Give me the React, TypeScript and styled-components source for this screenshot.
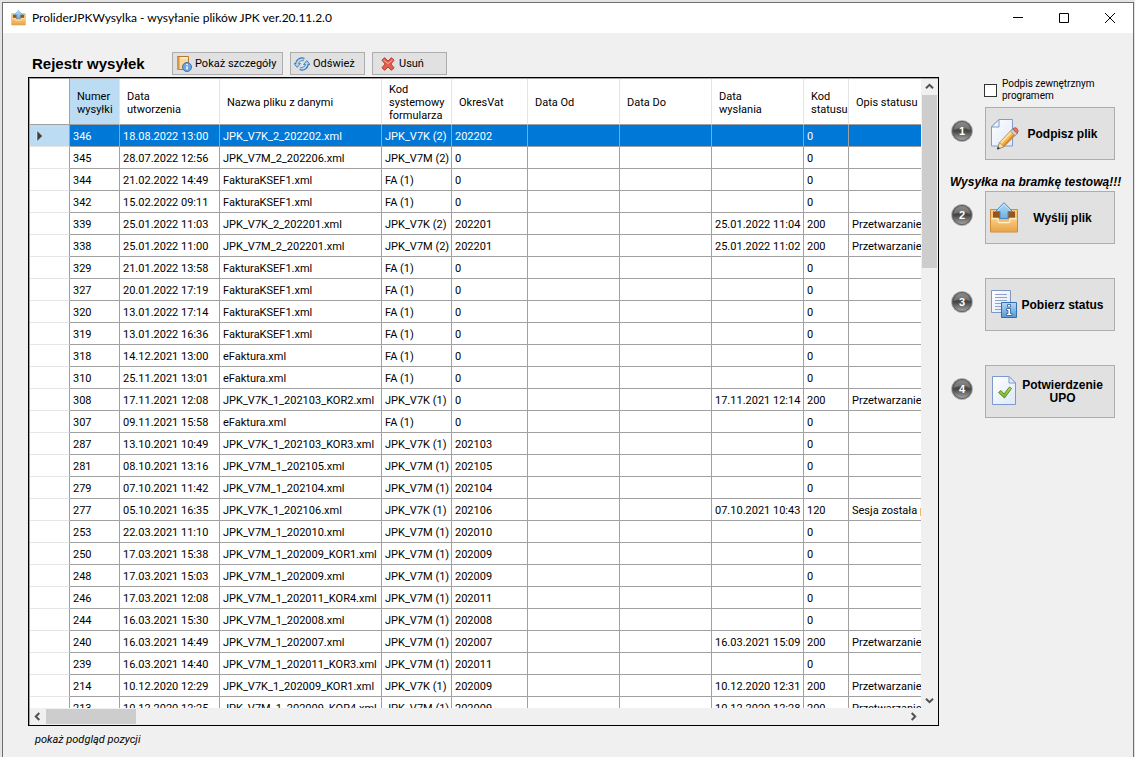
import React from "react";
import styled, { createGlobalStyle, css } from "styled-components";

const GlobalStyle = createGlobalStyle`
  *, *::before, *::after { box-sizing: border-box; }
  body {
    margin: 0;
    background: #e4e4e4;
    color: #000;
    font-family: Roboto, "Liberation Sans", Arial, sans-serif;
    font-size: 11px;
    line-height: 13px;
  }
  button { font: inherit; color: inherit; }
`;

const boldFace = css`
  font-family: "Liberation Sans", Arial, sans-serif;
  font-weight: 700;
`;

/* ---------- window frame ---------- */

const Desktop = styled.div`
  height: 100vh;
  padding: 2px 1px 0 2px;
`;

const Window = styled.div`
  display: flex;
  flex-direction: column;
  height: 100%;
  border: 1px solid #6e6e6e;
  border-bottom: 0;
  background: #f0f0f0;
`;

const TitleBar = styled.header`
  display: flex;
  align-items: center;
  flex: none;
  height: 30px;
  padding-left: 8px;
  background: #fff;
`;

const Title = styled.h1`
  flex: 1;
  margin: 0 0 0 5px;
  font-family: Lato, "Segoe UI", sans-serif;
  font-size: 12px;
  font-weight: 400;
  line-height: 16px;
  white-space: nowrap;
`;

const CaptionButton = styled.button`
  display: flex;
  align-items: center;
  justify-content: center;
  width: 46px;
  height: 30px;
  padding: 0;
  border: 0;
  background: transparent;
`;

const Body = styled.div`
  display: flex;
  flex: 1;
  min-height: 0;
  padding-left: 25px;
`;

/* ---------- left part ---------- */

const Register = styled.main`
  display: flex;
  flex: 1;
  flex-direction: column;
  min-width: 0;
`;

const Toolbar = styled.div`
  display: flex;
  align-items: center;
  flex: none;
  gap: 7px;
  padding: 19px 0 2px 4px;
`;

const Heading = styled.h2`
  width: 133px;
  margin: 0;
  ${boldFace}
  font-size: 15px;
  line-height: 20px;
  white-space: nowrap;
`;

const ToolButton = styled.button<{ $wide?: boolean; $inset?: boolean }>`
  display: flex;
  align-items: center;
  gap: 3px;
  width: ${(p) => (p.$wide ? 111 : 75)}px;
  height: 23px;
  padding: 0 0 0 ${(p) => (p.$inset ? 7 : 3)}px;
  border: 1px solid #adadad;
  background: #e1e1e1;
  white-space: nowrap;
`;

const GridFrame = styled.div`
  flex: 1;
  min-height: 0;
  border: 1px solid #000;
`;

const GridInner = styled.div`
  display: grid;
  grid-template-columns: minmax(0, 1fr) 15px;
  grid-template-rows: minmax(0, 1fr) 15px;
  gap: 1px;
  height: 100%;
  padding: 0 1px 1px 0;
  border-top: 1px solid #a0a0a0;
  border-left: 1px solid #a0a0a0;
`;

const Viewport = styled.div`
  overflow: hidden;
  background: #fff;
`;

const Table = styled.table`
  width: 100%;
  border-collapse: separate;
  border-spacing: 0;
  table-layout: fixed;
`;

const HeadCell = styled.th<{ $current?: boolean; $corner?: boolean }>`
  height: 46px;
  padding: 2px 0 0 7px;
  border-right: 1px solid ${(p) => (p.$corner ? "#a0a0a0" : "#e5e5e5")};
  border-bottom: 1px solid #a0a0a0;
  background: ${(p) => (p.$current ? "#bcdcf4" : "#fff")};
  font-weight: 400;
  text-align: left;
  white-space: pre;
  &:last-child { border-right: 0; }
`;

const RowHead = styled.td`
  padding: 0 0 0 6px;
  border-right: 1px solid #a0a0a0;
  border-bottom: 1px solid #e5e5e5;
  svg { display: block; }
`;

const Cell = styled.td`
  height: 22px;
  padding: 2px 0 0 3px;
  overflow: hidden;
  border-right: 1px solid #a0a0a0;
  border-bottom: 1px solid #a0a0a0;
  white-space: nowrap;
  &:last-child { border-right: 0; }
`;

const Row = styled.tr<{ $selected?: boolean }>`
  ${(p) =>
    p.$selected &&
    css`
      ${Cell} { background: #0078d7; color: #fff; }
      ${RowHead} { background: #bcdcf4; }
    `}
`;

const Scroll = styled.div<{ $horizontal?: boolean }>`
  display: flex;
  flex-direction: ${(p) => (p.$horizontal ? "row" : "column")};
  background: #f0f0f0;
`;

const ScrollButton = styled.button`
  display: flex;
  align-items: center;
  justify-content: center;
  flex: none;
  width: 15px;
  height: 15px;
  padding: 0;
  border: 0;
  background: transparent;
`;

const Track = styled.div<{ $horizontal?: boolean }>`
  display: flex;
  flex: 1;
  flex-direction: ${(p) => (p.$horizontal ? "row" : "column")};
  padding: ${(p) => (p.$horizontal ? "0 1px" : "1px 0")};
`;

const Thumb = styled.div<{ $share: number }>`
  flex: 0 0 ${(p) => p.$share}%;
  background: #cdcdcd;
`;

const Footer = styled.footer`
  flex: none;
  height: 31px;
  padding: 7px 0 0 7px;
  font-style: italic;
`;

/* ---------- right part ---------- */

const Steps = styled.aside`
  display: flex;
  flex: none;
  flex-direction: column;
  width: 194px;
  padding: 45px 0 0 11px;
`;

const ExternalSign = styled.label`
  display: flex;
  align-items: center;
  gap: 5px;
  margin: 0 0 5px 34px;
  font-size: 10px;
  line-height: 12px;
  white-space: pre;
`;

const CheckBox = styled.input`
  width: 13px;
  height: 13px;
  margin: 0;
  border: 1px solid #333;
  background: #fff;
  appearance: none;
`;

const Step = styled.div<{ $spaced?: boolean }>`
  display: flex;
  align-items: center;
  gap: 11px;
  margin-top: ${(p) => (p.$spaced ? 34 : 0)}px;
`;

const Badge = styled.span`
  flex: none;
  width: 24px;
  height: 30px;
  svg { display: block; }
`;

const StepButton = styled.button`
  display: flex;
  align-items: center;
  width: 130px;
  height: 53px;
  padding: 0 10px 0 3px;
  border: 1px solid #adadad;
  background: #e1e1e1;
  ${boldFace}
  font-size: 12px;
  svg { flex: none; }
`;

const StepLabel = styled.span`
  flex: 1;
  padding-top: 1px;
  text-align: center;
  white-space: pre;
`;

const Warning = styled.p`
  margin: 14px 0 1px;
  ${boldFace}
  font-size: 12px;
  font-style: italic;
  line-height: 16px;
  white-space: nowrap;
`;

/* ---------- drawings ---------- */

const TrayIcon = ({ size }: { size: number }) => (
  <svg width={size} height={size} viewBox="0 0 32 32" aria-hidden="true">
    <defs>
      <linearGradient id="tray" x1="0" y1="0" x2="0" y2="1">
        <stop offset="0" stopColor="#f9d084" />
        <stop offset="1" stopColor="#e8a34a" />
      </linearGradient>
      <linearGradient id="up" x1="0" y1="0" x2="0" y2="1">
        <stop offset="0" stopColor="#b4dcf5" />
        <stop offset="1" stopColor="#6fb0e0" />
      </linearGradient>
    </defs>
    <path d="M1.500 7.500h27v22.500h-27z" fill="url(#tray)" stroke="#cf8b35" />
    <path d="M4 9.500h22v7h-22z" fill="#9a5318" />
    <path d="M2 16h7v3q0 1.500 1.500 1.500h9q1.500 0 1.500-1.500v-3h7v13.500h-26z" fill="url(#tray)" />
    <path d="M2.500 16.500h6.500v2.500q0 1.500 1.500 1.500h9q1.500 0 1.500-1.500v-2.500h6.500" fill="none" stroke="#fff0c8" strokeWidth="1.300" />
    <path d="M15 .7l8.500 8.800h-4.500v7h-8v-7h-4.500z" fill="url(#up)" stroke="#4b89c4" strokeLinejoin="round" />
    <path d="M8.700 8.700l6.300-6.700 6.300 6.700" stroke="#d6edfa" strokeWidth=".8" fill="none" />
  </svg>
);

const DetailsIcon = () => (
  <svg width="16" height="16" viewBox="0 0 16 16" aria-hidden="true">
    <path d="M1.500.5h11v13h-11z" fill="#f9d9a0" stroke="#b9782f" />
    <path d="M1 1h2.500v13H1z" fill="#d99443" />
    <path d="M4 2h8" stroke="#fff5dc" />
    <circle cx="11" cy="11" r="4.500" fill="#6fa5dc" stroke="#3f72b2" />
    <path d="M11 8v1.300M11 10.200v3.300" stroke="#fff" strokeWidth="1.500" />
  </svg>
);

const RefreshIcon = () => (
  <svg width="16" height="16" viewBox="0 0 16 16" aria-hidden="true">
    <g fill="none" stroke="#3a70aa" strokeWidth="3.600">
      <path d="M3.200 9.500A5 5 0 0 1 10 3.600" />
      <path d="M12.800 6.500A5 5 0 0 1 6 12.400" />
    </g>
    <path d="M0 7.500h6.400L3.200 11.500zM16 8.500H9.600l3.200-4z" fill="#a9d2f2" stroke="#3a70aa" strokeWidth=".8" />
    <g fill="none" stroke="#b5daf5" strokeWidth="1.900">
      <path d="M3.200 8.500A5 5 0 0 1 9.700 3.600" />
      <path d="M12.800 7.500A5 5 0 0 1 6.300 12.400" />
    </g>
  </svg>
);

const DeleteIcon = () => (
  <svg width="16" height="16" viewBox="0 0 16 16" aria-hidden="true">
    <path
      d="M2 4.200 4.500 1.700 8 5l3.500-3.300L14 4.200 10.800 8l3.200 3.800-2.500 2.500L8 11l-3.500 3.300L2 11.800 5.200 8z"
      fill="#e2604f"
      stroke="#b93527"
      strokeLinejoin="round"
    />
    <path d="M3.500 4.200 8 7.500l4.500-3.500" fill="none" stroke="#f6a99b" />
  </svg>
);

const PageGradient = ({ id }: { id: string }) => (
  <linearGradient id={id} x1="0" y1="0" x2="1" y2="1">
    <stop offset="0" stopColor="#fff" />
    <stop offset="1" stopColor="#dde8f8" />
  </linearGradient>
);

const SignIcon = () => (
  <svg width="32" height="32" viewBox="0 0 32 32" aria-hidden="true">
    <defs><PageGradient id="pageSign" /></defs>
    <path d="M10 1.500h13.500v26.500H2.500v-19z" fill="url(#pageSign)" stroke="#7f9bd0" />
    <path d="M10 1.500v7.500h-7.500z" fill="#eef3fc" stroke="#7f9bd0" />
    <path d="M8.500 31l2-6.500L23.500 11l4.500 4.500L14.500 29z" fill="#f6b44a" stroke="#a8701f" strokeWidth=".8" />
    <path d="M11.700 25L24 12.500" stroke="#fde3a2" strokeWidth="1.800" />
    <path d="M14.300 28L27 15" stroke="#d98424" strokeWidth="1.400" />
    <path d="M21.500 13.300l4.500 4.500 2.300-2.300-4.500-4.500z" fill="#c9cedb" stroke="#76809a" strokeWidth=".6" />
    <path d="M23.800 11l1.500-1.200c2.100-.6 4.300 1.600 3.700 3.900l-1 1.500z" fill="#e77366" stroke="#ac3c37" strokeWidth=".7" />
    <path d="M8.500 31l2-6.500 4.200 4.300z" fill="#f8dfb5" stroke="#8f7650" strokeWidth=".5" />
    <path d="M8 31.500l1-3 2 2z" fill="#333" />
  </svg>
);

const StatusIcon = () => (
  <svg width="32" height="32" viewBox="0 0 32 32" aria-hidden="true">
    <defs>
      <PageGradient id="pageStatus" />
      <linearGradient id="info" x1="0" y1="0" x2="0" y2="1">
        <stop offset="0" stopColor="#b4d8f2" />
        <stop offset="1" stopColor="#5699d0" />
      </linearGradient>
    </defs>
    <path d="M2.500 1.500h19v22h-19z" fill="url(#pageStatus)" stroke="#8094c6" />
    <path d="M6 5.500h12M6 8.500h12M6 11.500h12M6 14.500h7M6 17.500h6M6 20.500h6" stroke="#8ea2cc" />
    <path d="M12.500 13.500h15v15h-15z" fill="url(#info)" stroke="#2d6faf" />
    <path
      d="M18.500 15.500h3v2.500h-3zM17.500 19.500h4v5h1.500v2h-5.500v-2H19v-3h-1.500z"
      fill="#fff"
      stroke="#235c9c"
      strokeWidth=".8"
    />
  </svg>
);

const ConfirmIcon = () => (
  <svg width="32" height="32" viewBox="0 0 32 32" aria-hidden="true">
    <defs>
      <PageGradient id="pageConfirm" />
      <linearGradient id="tick" x1="0" y1="0" x2="0" y2="1">
        <stop offset="0" stopColor="#b9e05c" />
        <stop offset="1" stopColor="#72ad28" />
      </linearGradient>
    </defs>
    <path d="M3.500.5H20l6.500 6.500v21.500h-23z" fill="url(#pageConfirm)" stroke="#7f98cb" />
    <path d="M20 .5V7h6.500z" fill="#e7eefa" stroke="#7f98cb" />
    <path d="M9.500 16.500l2.500-2 3 3.500 5.500-7 2 1.500-7 9.500z" fill="url(#tick)" stroke="#578a27" strokeLinejoin="round" />
  </svg>
);

const NumberBadge = ({ n }: { n: number }) => (
  <Badge>
    <svg width="24" height="24" viewBox="0 0 24 24" role="img" aria-label={`${n}`}>
      <defs>
        <linearGradient id={`ball${n}`} x1="0" y1="0" x2="0" y2="1">
          <stop offset="0" stopColor="#6a6a6a" />
          <stop offset=".5" stopColor="#444" />
          <stop offset="1" stopColor="#a8a8a8" />
        </linearGradient>
      </defs>
      <circle cx="12" cy="12" r="10.500" fill="#777" stroke="#b4b4b4" />
      <circle cx="12" cy="12" r="9.500" fill={`url(#ball${n})`} stroke="#606060" />
      <path d="M4 11a8 8 0 0 1 16 0q-8-4-16 0z" fill="#fff" opacity=".22" />
      <text x="12" y="16" textAnchor="middle" fontSize="11" fontWeight="700" fontFamily="Liberation Sans, Arial, sans-serif" fill="#fff">{n}</text>
    </svg>
  </Badge>
);

const Chevron = ({ turn }: { turn: number }) => (
  <svg width="9" height="9" viewBox="0 0 9 9" aria-hidden="true">
    <path d="M1 6.300l3.500-3.500L8 6.300" fill="none" stroke="#505050" strokeWidth="2" transform={`rotate(${turn} 4.500 4.500)`} />
  </svg>
);

const CurrentRowMark = () => (
  <svg width="8" height="12" viewBox="0 0 8 12" role="img" aria-label="Bieżący wiersz">
    <path d="M1 .5l5.500 5.500-5.500 5.500z" fill="#404040" stroke="#fff" strokeWidth=".5" />
  </svg>
);

/* ---------- data ---------- */

const columns = [
  { label: "Numer\nwysyłki", width: 50 },
  { label: "Data\nutworzenia", width: 100 },
  { label: "Nazwa pliku z danymi", width: 162 },
  { label: "Kod\nsystemowy\nformularza", width: 70 },
  { label: "OkresVat", width: 76 },
  { label: "Data Od", width: 92 },
  { label: "Data Do", width: 92 },
  { label: "Data\nwysłania", width: 92 },
  { label: "Kod\nstatusu", width: 45 },
  { label: "Opis statusu", width: undefined },
];

type Shipment = [string, string, string, string, string, string?, string?, string?];

const shipments: Shipment[] = [
  ["346", "18.08.2022 13:00", "JPK_V7K_2_202202.xml", "JPK_V7K (2)", "202202"],
  ["345", "28.07.2022 12:56", "JPK_V7M_2_202206.xml", "JPK_V7M (2)", "0"],
  ["344", "21.02.2022 14:49", "FakturaKSEF1.xml", "FA (1)", "0"],
  ["342", "15.02.2022 09:11", "FakturaKSEF1.xml", "FA (1)", "0"],
  ["339", "25.01.2022 11:03", "JPK_V7K_2_202201.xml", "JPK_V7K (2)", "202201", "25.01.2022 11:04", "200", "Przetwarzanie"],
  ["338", "25.01.2022 11:00", "JPK_V7M_2_202201.xml", "JPK_V7M (2)", "202201", "25.01.2022 11:02", "200", "Przetwarzanie"],
  ["329", "21.01.2022 13:58", "FakturaKSEF1.xml", "FA (1)", "0"],
  ["327", "20.01.2022 17:19", "FakturaKSEF1.xml", "FA (1)", "0"],
  ["320", "13.01.2022 17:14", "FakturaKSEF1.xml", "FA (1)", "0"],
  ["319", "13.01.2022 16:36", "FakturaKSEF1.xml", "FA (1)", "0"],
  ["318", "14.12.2021 13:00", "eFaktura.xml", "FA (1)", "0"],
  ["310", "25.11.2021 13:01", "eFaktura.xml", "FA (1)", "0"],
  ["308", "17.11.2021 12:08", "JPK_V7K_1_202103_KOR2.xml", "JPK_V7K (1)", "0", "17.11.2021 12:14", "200", "Przetwarzanie"],
  ["307", "09.11.2021 15:58", "eFaktura.xml", "FA (1)", "0"],
  ["287", "13.10.2021 10:49", "JPK_V7K_1_202103_KOR3.xml", "JPK_V7K (1)", "202103"],
  ["281", "08.10.2021 13:16", "JPK_V7M_1_202105.xml", "JPK_V7M (1)", "202105"],
  ["279", "07.10.2021 11:42", "JPK_V7M_1_202104.xml", "JPK_V7M (1)", "202104"],
  ["277", "05.10.2021 16:35", "JPK_V7K_1_202106.xml", "JPK_V7K (1)", "202106", "07.10.2021 10:43", "120", "Sesja została p"],
  ["253", "22.03.2021 11:10", "JPK_V7M_1_202010.xml", "JPK_V7M (1)", "202010"],
  ["250", "17.03.2021 15:38", "JPK_V7M_1_202009_KOR1.xml", "JPK_V7M (1)", "202009"],
  ["248", "17.03.2021 15:03", "JPK_V7M_1_202009.xml", "JPK_V7M (1)", "202009"],
  ["246", "17.03.2021 12:08", "JPK_V7M_1_202011_KOR4.xml", "JPK_V7M (1)", "202011"],
  ["244", "16.03.2021 15:30", "JPK_V7M_1_202008.xml", "JPK_V7M (1)", "202008"],
  ["240", "16.03.2021 14:49", "JPK_V7M_1_202007.xml", "JPK_V7M (1)", "202007", "16.03.2021 15:09", "200", "Przetwarzanie"],
  ["239", "16.03.2021 14:40", "JPK_V7M_1_202011_KOR3.xml", "JPK_V7M (1)", "202011"],
  ["214", "10.12.2020 12:29", "JPK_V7K_1_202009_KOR1.xml", "JPK_V7K (1)", "202009", "10.12.2020 12:31", "200", "Przetwarzanie"],
  ["213", "10.12.2020 12:25", "JPK_V7M_1_202009_KOR4.xml", "JPK_V7M (1)", "202009", "10.12.2020 12:28", "200", "Przetwarzanie"],
];

const ShipmentRow = ({ data, selected }: { data: Shipment; selected: boolean }) => {
  const [id, created, file, code, period, sent = "", status = "0", note = ""] = data;
  return (
    <Row $selected={selected}>
      <RowHead>{selected && <CurrentRowMark />}</RowHead>
      {[id, created, file, code, period, "", "", sent, status, note].map((value, i) => (
        <Cell key={i}>{value}</Cell>
      ))}
    </Row>
  );
};

export default function App() {
  return (
    <>
      <GlobalStyle />
      <Desktop>
        <Window>
          <TitleBar>
            <TrayIcon size={16} />
            <Title>ProliderJPKWysylka - wysyłanie plików JPK ver.20.11.2.0</Title>
            <CaptionButton aria-label="Minimalizuj">
              <svg width="10" height="10"><path d="M0 4.500h10" stroke="#000" /></svg>
            </CaptionButton>
            <CaptionButton aria-label="Maksymalizuj">
              <svg width="10" height="10"><path d="M.5.5h9v9h-9z" fill="none" stroke="#000" /></svg>
            </CaptionButton>
            <CaptionButton aria-label="Zamknij">
              <svg width="10" height="10"><path d="M0 0l10 10M10 0L0 10" stroke="#000" /></svg>
            </CaptionButton>
          </TitleBar>
          <Body>
            <Register>
              <Toolbar>
                <Heading>Rejestr wysyłek</Heading>
                <ToolButton $wide><DetailsIcon />Pokaż szczegóły</ToolButton>
                <ToolButton><RefreshIcon />Odśwież</ToolButton>
                <ToolButton $inset><DeleteIcon />Usuń</ToolButton>
              </Toolbar>
              <GridFrame>
                <GridInner>
                  <Viewport>
                    <Table>
                      <colgroup>
                        <col width={40} />
                        {columns.map((c) => <col key={c.label} width={c.width} />)}
                      </colgroup>
                      <thead>
                        <tr>
                          <HeadCell $corner />
                          {columns.map((c, i) => (
                            <HeadCell key={c.label} $current={i === 0}>{c.label}</HeadCell>
                          ))}
                        </tr>
                      </thead>
                      <tbody>
                        {shipments.map((s, i) => (
                          <ShipmentRow key={s[0]} data={s} selected={i === 0} />
                        ))}
                      </tbody>
                    </Table>
                  </Viewport>
                  <Scroll>
                    <ScrollButton aria-label="W górę"><Chevron turn={0} /></ScrollButton>
                    <Track><Thumb $share={29} /></Track>
                    <ScrollButton aria-label="W dół"><Chevron turn={180} /></ScrollButton>
                  </Scroll>
                  <Scroll $horizontal>
                    <ScrollButton aria-label="W lewo"><Chevron turn={270} /></ScrollButton>
                    <Track $horizontal><Thumb $share={10.5} /></Track>
                    <ScrollButton aria-label="W prawo"><Chevron turn={90} /></ScrollButton>
                  </Scroll>
                </GridInner>
              </GridFrame>
              <Footer>pokaż podgląd pozycji</Footer>
            </Register>
            <Steps>
              <ExternalSign>
                <CheckBox type="checkbox" />
                {"Podpis zewnętrznym\nprogramem"}
              </ExternalSign>
              <Step>
                <NumberBadge n={1} />
                <StepButton><SignIcon /><StepLabel>Podpisz plik</StepLabel></StepButton>
              </Step>
              <Warning>Wysyłka na bramkę testową!!!</Warning>
              <Step>
                <NumberBadge n={2} />
                <StepButton><TrayIcon size={32} /><StepLabel>Wyślij plik</StepLabel></StepButton>
              </Step>
              <Step $spaced>
                <NumberBadge n={3} />
                <StepButton><StatusIcon /><StepLabel>Pobierz status</StepLabel></StepButton>
              </Step>
              <Step $spaced>
                <NumberBadge n={4} />
                <StepButton><ConfirmIcon /><StepLabel>{"Potwierdzenie\nUPO"}</StepLabel></StepButton>
              </Step>
            </Steps>
          </Body>
        </Window>
      </Desktop>
    </>
  );
}
